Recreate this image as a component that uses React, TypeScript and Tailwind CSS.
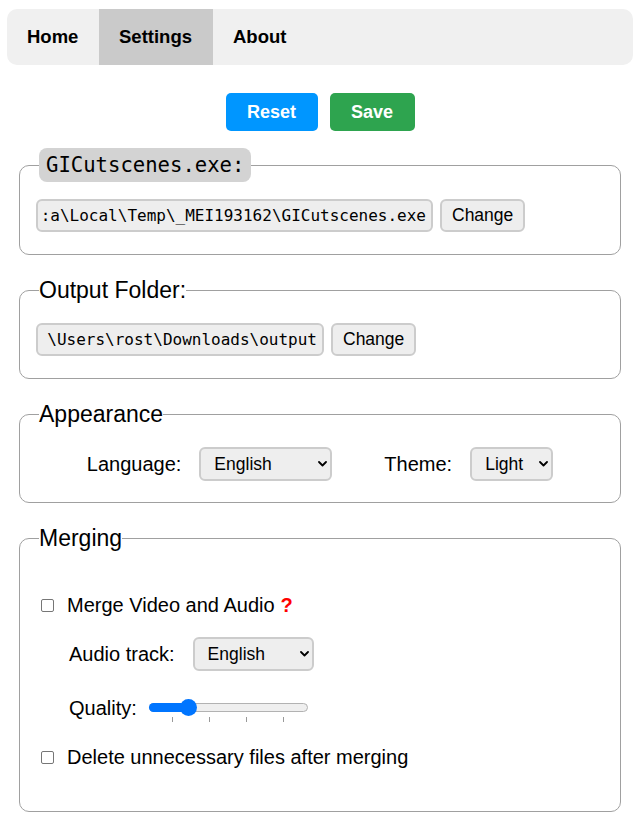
import React from "react";

const sans = { fontFamily: '"Liberation Sans", Arial, sans-serif' } as React.CSSProperties;
const mono = { fontFamily: '"DejaVu Sans Mono", "Liberation Mono", monospace' } as React.CSSProperties;

function Chevron() {
  return (
    <svg width="9" height="6" viewBox="0 0 9 6" className="shrink-0">
      <path d="M1 1 L4.5 4.5 L8 1" fill="none" stroke="#000" strokeWidth="1.8" strokeLinecap="round" strokeLinejoin="round" />
    </svg>
  );
}

function Select({ value, width }: { value: string; width: number }) {
  return (
    <div
      className="h-[34px] flex items-center justify-between pl-[13px] pr-[3px] border-2 border-[#cccccc] bg-[#eeeeee] rounded-[6px] text-[17.5px] text-black"
      style={{ width }}
    >
      <span>{value}</span>
      <Chevron />
    </div>
  );
}

function Checkbox() {
  return <div className="w-[13px] h-[13px] border border-[#767676] rounded-[2px] bg-white shrink-0" />;
}

function PathBox({ text, width, pl }: { text: string; width: number; pl: number }) {
  return (
    <div
      className="h-[33px] flex items-center justify-end overflow-hidden border-2 border-[#cccccc] bg-[#eeeeee] rounded-[6px] pr-[5px]"
      style={{ width, paddingLeft: pl }}
    >
      <span className="whitespace-nowrap text-[16px] text-black" style={mono}>
        {text}
      </span>
    </div>
  );
}

function ChangeButton() {
  return (
    <div className="h-[33px] flex items-center px-[10px] border-2 border-[#cccccc] bg-[#eeeeee] rounded-[6px] text-[17.5px] text-black">
      Change
    </div>
  );
}

export default function App() {
  return (
    <div className="w-[640px] min-h-[820px] bg-white text-black pb-[10px]" style={sans}>
      <nav className="mx-[7px] mt-[9px] h-[56px] bg-[#f0f0f0] rounded-[10px] flex overflow-hidden">
        <div className="px-[20px] w-[92px] flex items-center pb-px text-[18.5px] font-bold">Home</div>
        <div className="px-[20px] w-[114px] flex items-center pb-px text-[18.5px] font-bold bg-[#cacaca]">Settings</div>
        <div className="px-[20px] flex items-center pb-px text-[18.5px] font-bold">About</div>
      </nav>

      <div className="mt-[28px] flex justify-center gap-[12px]">
        <div className="h-[38px] w-[92px] flex items-center justify-center rounded-[5px] bg-[#0096ff] text-white text-[18px] font-bold">
          Reset
        </div>
        <div className="h-[38px] w-[85px] flex items-center justify-center rounded-[5px] bg-[#2ea44f] text-white text-[18px] font-bold">
          Save
        </div>
      </div>

      <fieldset className="mx-[19px] mt-[17px] border border-[#a0a0a0] rounded-[10px] px-[16px] pt-[17px] pb-[22px]">
        <legend className="ml-[3px] px-[7px] h-[34px] leading-[34px] bg-[#d3d3d3] rounded-[8px] text-[20.6px]" style={mono}>
          GICutscenes.exe:
        </legend>
        <div className="flex items-center gap-[7px]">
          <PathBox text=":a\Local\Temp\_MEI193162\GICutscenes.exe" width={397} pl={1} />
          <ChangeButton />
        </div>
      </fieldset>

      <fieldset className="mx-[19px] mt-[22px] border border-[#a0a0a0] rounded-[10px] px-[16px] pt-[20px] pb-[22px]">
        <legend className="ml-[3px] text-[23px] leading-[26px]">Output Folder:</legend>
        <div className="flex items-center gap-[7px]">
          <PathBox text="\Users\rost\Downloads\output" width={288} pl={6} />
          <ChangeButton />
        </div>
      </fieldset>

      <fieldset className="mx-[19px] mt-[22px] border border-[#a0a0a0] rounded-[10px] px-[16px] pt-[20px] pb-[21px]">
        <legend className="ml-[3px] text-[23px] leading-[26px]">Appearance</legend>
        <div className="flex items-center justify-center text-[20px]">
          <span>Language:</span>
          <div className="ml-[18px]">
            <Select value="English" width={133} />
          </div>
          <span className="ml-[52px]">Theme:</span>
          <div className="ml-[18px]">
            <Select value="Light" width={83} />
          </div>
        </div>
      </fieldset>

      <fieldset className="mx-[19px] mt-[22px] border border-[#a0a0a0] rounded-[10px] px-[16px] pt-[37px] pb-[37px]">
        <legend className="ml-[3px] text-[23px] leading-[26px]">Merging</legend>
        <div className="flex flex-col text-[20px]">
          <div className="h-[34px] flex items-center pl-[5px]">
            <Checkbox />
            <span className="ml-[13px]">Merge Video and Audio</span>
            <span className="ml-[6px] text-[#ff0000] font-bold">?</span>
          </div>
          <div className="mt-[15px] h-[34px] flex items-center pl-[33px]">
            <span>Audio track:</span>
            <div className="ml-[18px]">
              <Select value="English" width={121} />
            </div>
          </div>
          <div className="mt-[20px] h-[34px] flex items-center pl-[33px]">
            <span>Quality:</span>
            <div className="ml-[12px] relative w-[159px] h-[34px]">
              <div className="absolute left-0 right-0 top-[12px] h-[9px] rounded-full border border-[#b2b2b2] bg-[#efefef]" />
              <div className="absolute left-0 top-[12px] w-[40px] h-[9px] rounded-full bg-[#0075ff]" />
              <div className="absolute left-[31px] top-[8px] w-[17px] h-[17px] rounded-full bg-[#0075ff]" />
              <div className="absolute left-[23px] top-[26px] w-px h-[5px] bg-[#999]" />
              <div className="absolute left-[60px] top-[26px] w-px h-[5px] bg-[#999]" />
              <div className="absolute left-[97px] top-[26px] w-px h-[5px] bg-[#999]" />
              <div className="absolute left-[134px] top-[26px] w-px h-[5px] bg-[#999]" />
            </div>
          </div>
          <div className="mt-[15px] h-[34px] flex items-center pl-[5px]">
            <Checkbox />
            <span className="ml-[13px]">Delete unnecessary files after merging</span>
          </div>
        </div>
      </fieldset>
    </div>
  );
}
